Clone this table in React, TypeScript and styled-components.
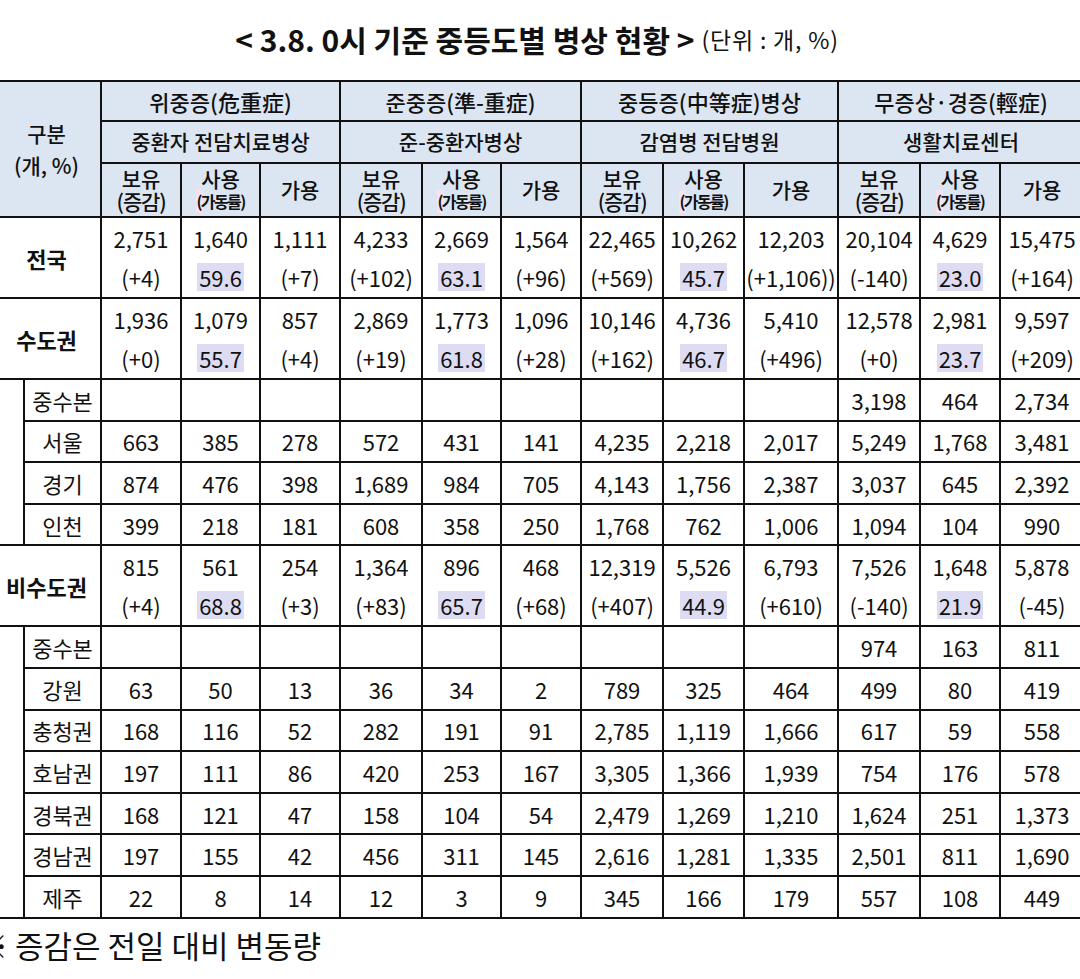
import React from "react";
import styled, { createGlobalStyle } from "styled-components";

/* styled-components */

const GlobalStyle = createGlobalStyle`
  html, body {
    margin: 0;
    padding: 0;
    background: #ffffff;
    overflow: hidden;
  }
  body {
    font-family: "Noto Sans CJK KR", "Noto Sans", sans-serif;
    color: #111;
  }
`;

const Page = styled.div`
  width: 1092px;
  margin-left: -9px;
`;

const TitleBar = styled.div`
  height: 80px;
  display: flex;
  align-items: center;
  justify-content: center;
  gap: 7px;
  padding-bottom: 2px;
  box-sizing: border-box;
`;

const Title = styled.span`
  font-size: 30px;
  font-weight: 700;
`;

const Unit = styled.span`
  font-size: 23px;
  font-weight: 400;
  letter-spacing: 0.8px;
`;

const Table = styled.table`
  width: 1092px;
  border-collapse: collapse;
  table-layout: fixed;
`;

const HeadCell = styled.th<{ $h?: number; $size?: number }>`
  background: #dce6f2;
  border: 2px solid #111;
  font-size: ${(p) => p.$size ?? 21}px;
  font-weight: 500;
  padding: 0;
  height: ${(p) => (p.$h ? `${p.$h}px` : "auto")};
  text-align: center;
  vertical-align: middle;
  line-height: 1.1;
  white-space: nowrap;
`;

const HeadStack = styled.div`
  display: flex;
  flex-direction: column;
  align-items: center;
  line-height: 23px;
`;

const LabelGap = styled.span`
  margin-top: 9px;
`;

const SubNote = styled.span`
  font-size: 21px;
  letter-spacing: -1.2px;
`;

const RateNote = styled.span`
  font-size: 16px;
  font-weight: 600;
  letter-spacing: -1.6px;
  line-height: 23px;
  background: linear-gradient(90deg, #f6e3f0 0 7px, transparent 7px);
`;

const Cell = styled.td<{ $h?: number; $bold?: boolean }>`
  border: 2px solid #111;
  padding: 0;
  height: ${(p) => (p.$h ? `${p.$h}px` : "auto")};
  font-size: 22px;
  font-weight: ${(p) => (p.$bold ? 700 : 400)};
  text-align: center;
  vertical-align: middle;
  white-space: nowrap;
`;

const Stack = styled.div`
  display: flex;
  flex-direction: column;
  align-items: center;
`;

const Line = styled.div`
  height: 39px;
  line-height: 39px;
`;

const Rate = styled.span`
  background: #dedcf3;
  padding: 0 2px;
  line-height: 28px;
  display: inline-block;
`;

const Footnote = styled.div`
  margin-left: -14px;
  margin-top: 6px;
  font-size: 31px;
  line-height: 40px;
  white-space: nowrap;
`;

/* ------------------------- data ------------------------- */

type Triple = [string, string, string, string, string, string];

const groups = [
  { name: "위중증(危重症)", sub: "중환자 전담치료병상" },
  { name: "준중증(準-重症)", sub: "준-중환자병상" },
  { name: "중등증(中等症)병상", sub: "감염병 전담병원" },
  { name: "무증상·경증(輕症)", sub: "생활치료센터" },
];

const colWidths = [32, 77, 80, 79, 80, 82, 79, 80, 82, 81, 94, 82, 80, 84];

// 보유, 증감, 사용, 가동률, 가용, 증감 per group
const totals: { name: string; groups: Triple[] }[] = [
  {
    name: "전국",
    groups: [
      ["2,751", "(+4)", "1,640", "59.6", "1,111", "(+7)"],
      ["4,233", "(+102)", "2,669", "63.1", "1,564", "(+96)"],
      ["22,465", "(+569)", "10,262", "45.7", "12,203", "(+1,106))"],
      ["20,104", "(-140)", "4,629", "23.0", "15,475", "(+164)"],
    ],
  },
  {
    name: "수도권",
    groups: [
      ["1,936", "(+0)", "1,079", "55.7", "857", "(+4)"],
      ["2,869", "(+19)", "1,773", "61.8", "1,096", "(+28)"],
      ["10,146", "(+162)", "4,736", "46.7", "5,410", "(+496)"],
      ["12,578", "(+0)", "2,981", "23.7", "9,597", "(+209)"],
    ],
  },
  {
    name: "비수도권",
    groups: [
      ["815", "(+4)", "561", "68.8", "254", "(+3)"],
      ["1,364", "(+83)", "896", "65.7", "468", "(+68)"],
      ["12,319", "(+407)", "5,526", "44.9", "6,793", "(+610)"],
      ["7,526", "(-140)", "1,648", "21.9", "5,878", "(-45)"],
    ],
  },
];

const capital: [string, string[]][] = [
  ["중수본", ["", "", "", "", "", "", "", "", "", "3,198", "464", "2,734"]],
  ["서울", ["663", "385", "278", "572", "431", "141", "4,235", "2,218", "2,017", "5,249", "1,768", "3,481"]],
  ["경기", ["874", "476", "398", "1,689", "984", "705", "4,143", "1,756", "2,387", "3,037", "645", "2,392"]],
  ["인천", ["399", "218", "181", "608", "358", "250", "1,768", "762", "1,006", "1,094", "104", "990"]],
];

const regions: [string, string[]][] = [
  ["중수본", ["", "", "", "", "", "", "", "", "", "974", "163", "811"]],
  ["강원", ["63", "50", "13", "36", "34", "2", "789", "325", "464", "499", "80", "419"]],
  ["충청권", ["168", "116", "52", "282", "191", "91", "2,785", "1,119", "1,666", "617", "59", "558"]],
  ["호남권", ["197", "111", "86", "420", "253", "167", "3,305", "1,366", "1,939", "754", "176", "578"]],
  ["경북권", ["168", "121", "47", "158", "104", "54", "2,479", "1,269", "1,210", "1,624", "251", "1,373"]],
  ["경남권", ["197", "155", "42", "456", "311", "145", "2,616", "1,281", "1,335", "2,501", "811", "1,690"]],
  ["제주", ["22", "8", "14", "12", "3", "9", "345", "166", "179", "557", "108", "449"]],
];

// heights exclude the 2px collapsed border
const ROW = 39.6;
const DOUBLE = 79;

/* ------------------------- components ------------------------- */

const TotalRow: React.FC<{ name: string; groups: Triple[] }> = ({ name, groups }) => (
  <tr>
    <Cell colSpan={2} $h={DOUBLE} $bold>
      {name}
    </Cell>
    {groups.map((g, gi) => (
      <React.Fragment key={gi}>
        <Cell>
          <Stack>
            <Line>{g[0]}</Line>
            <Line>{g[1]}</Line>
          </Stack>
        </Cell>
        <Cell>
          <Stack>
            <Line>{g[2]}</Line>
            <Line>
              <Rate>{g[3]}</Rate>
            </Line>
          </Stack>
        </Cell>
        <Cell>
          <Stack>
            <Line>{g[4]}</Line>
            <Line>{g[5]}</Line>
          </Stack>
        </Cell>
      </React.Fragment>
    ))}
  </tr>
);

const SubRows: React.FC<{ rows: [string, string[]][] }> = ({ rows }) => (
  <>
    {rows.map(([name, values], ri) => (
      <tr key={name + ri}>
        {ri === 0 && <Cell rowSpan={rows.length} />}
        <Cell $h={ROW}>{name}</Cell>
        {values.map((v, vi) => (
          <Cell key={vi}>{v}</Cell>
        ))}
      </tr>
    ))}
  </>
);

const App: React.FC = () => {
  return (
    <Page>
      <GlobalStyle />
      <TitleBar>
        <Title>&lt; 3.8. 0시 기준 중등도별 병상 현황 &gt;</Title>
        <Unit>(단위 : 개, %)</Unit>
      </TitleBar>

      <Table>
        <colgroup>
          {colWidths.map((w, i) => (
            <col key={i} style={{ width: w }} />
          ))}
        </colgroup>
        <thead>
          <tr>
            <HeadCell colSpan={2} rowSpan={3}>
              <HeadStack>
                <span>구분</span>
                <LabelGap>(개, %)</LabelGap>
              </HeadStack>
            </HeadCell>
            {groups.map((g) => (
              <HeadCell key={g.name} colSpan={3} $h={38} $size={22}>
                {g.name}
              </HeadCell>
            ))}
          </tr>
          <tr>
            {groups.map((g) => (
              <HeadCell key={g.sub} colSpan={3} $h={40}>
                {g.sub}
              </HeadCell>
            ))}
          </tr>
          <tr>
            {groups.map((g) => (
              <React.Fragment key={g.name}>
                <HeadCell $h={52}>
                  <HeadStack>
                    <span>보유</span>
                    <SubNote>(증감)</SubNote>
                  </HeadStack>
                </HeadCell>
                <HeadCell>
                  <HeadStack>
                    <span>사용</span>
                    <RateNote>(가동률)</RateNote>
                  </HeadStack>
                </HeadCell>
                <HeadCell>가용</HeadCell>
              </React.Fragment>
            ))}
          </tr>
        </thead>
        <tbody>
          <TotalRow {...totals[0]} />
          <TotalRow {...totals[1]} />
          <SubRows rows={capital} />
          <TotalRow {...totals[2]} />
          <SubRows rows={regions} />
        </tbody>
      </Table>

      <Footnote>※ 증감은 전일 대비 변동량</Footnote>
    </Page>
  );
};

export default App;
